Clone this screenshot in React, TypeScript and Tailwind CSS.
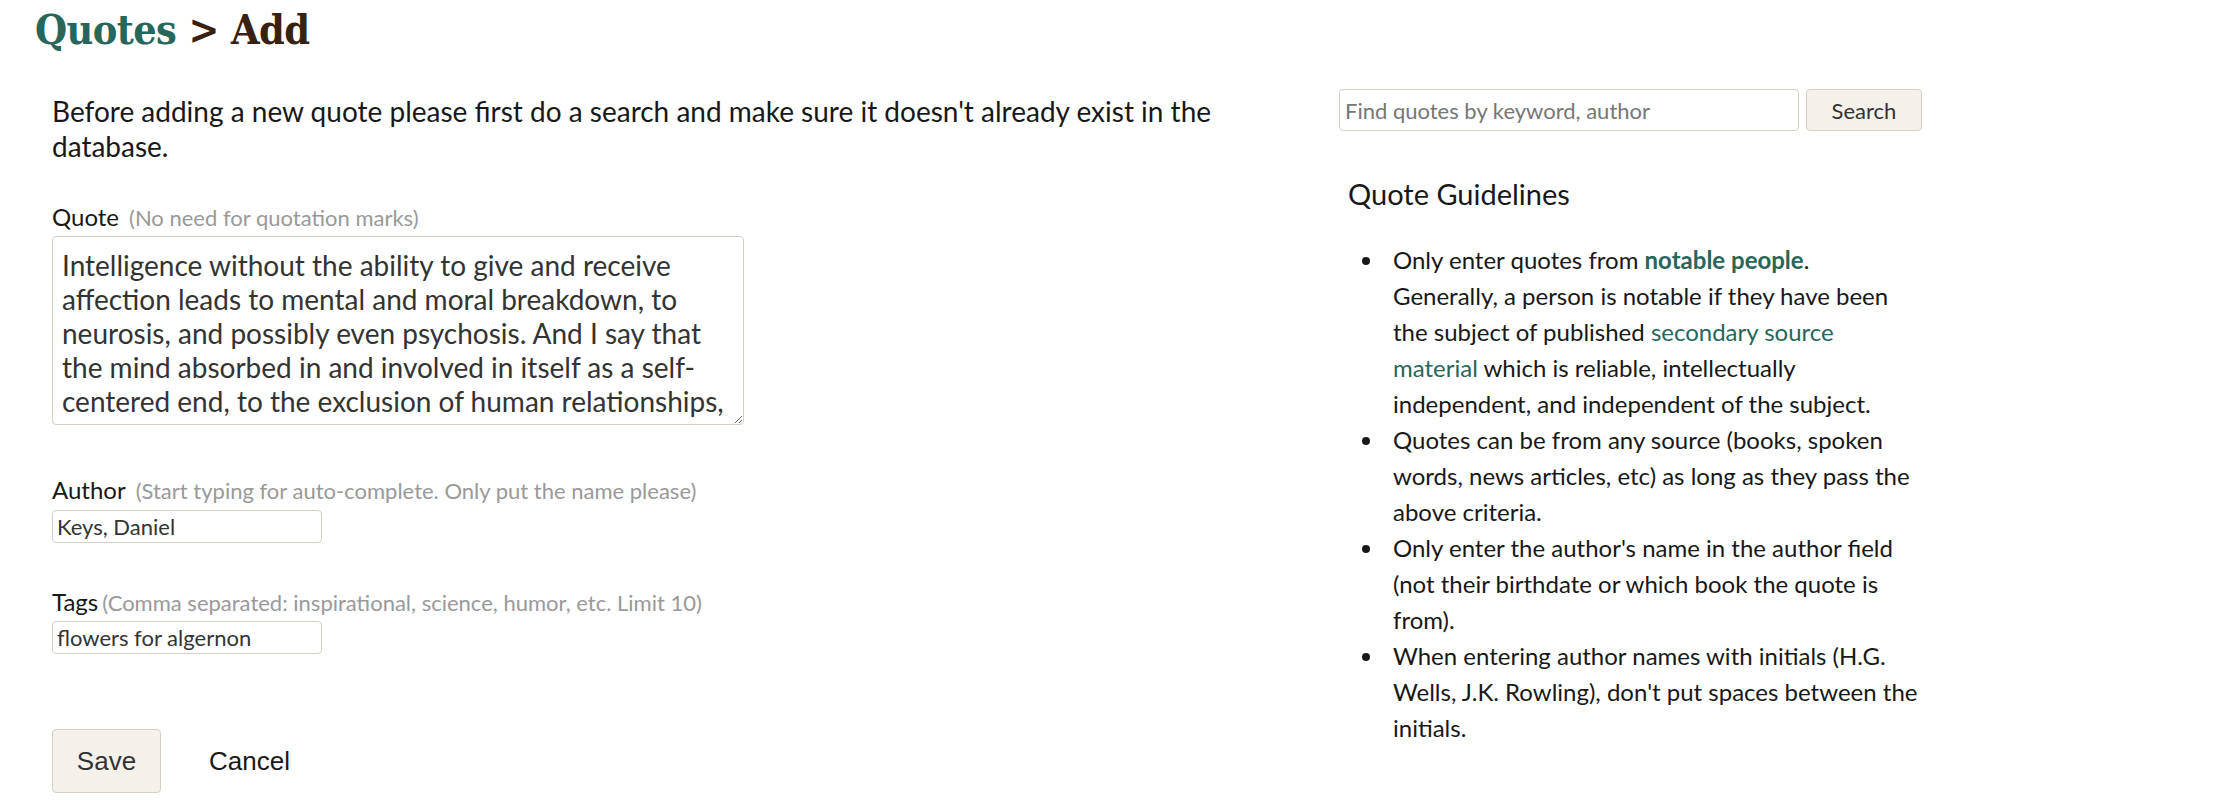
import React from 'react';

const quoteText =
  'Intelligence without the ability to give and receive affection leads to mental and moral breakdown, to neurosis, and possibly even psychosis. And I say that the mind absorbed in and involved in itself as a self-centered end, to the exclusion of human relationships, can only lead to violence and pain.';

export default function App() {
  return (
    <div className="w-[2214px] h-[810px] overflow-hidden bg-white text-[#181818] font-[Lato,sans-serif]">
      <h1 className="pl-[35px] pt-[6px] text-[41px] leading-[48px] font-bold font-['DejaVu_Serif',serif] font-stretch-condensed tracking-[-0.6px]">
        <span className="text-[#27665b]">Quotes</span>
        <span className="text-[#382110]"> &gt; Add</span>
      </h1>

      <div className="flex">
        {/* form column */}
        <div className="w-[1339px] pl-[52px]">
          <p className="mt-[40px] w-[1220px] text-[28px] leading-[35px]">
            Before adding a new quote please first do a search and make sure it doesn't already exist in the
            database.
          </p>

          <div className="mt-[36px] flex items-baseline gap-[10px]">
            <label className="text-[24px] leading-[34px]">Quote</label>
            <span className="text-[22px] text-[#999999]">(No need for quotation marks)</span>
          </div>
          <textarea
            defaultValue={quoteText}
            className="mt-[2px] block w-[692px] h-[189px] overflow-hidden rounded-[4px] border border-[#d6d0c4] pl-[9px] pr-[4px] pt-[11px] text-[28px] leading-[34px] text-[#333333] outline-none"
          />

          <div className="mt-[48px] flex items-baseline gap-[10px]">
            <label className="text-[24px] leading-[34px]">Author</label>
            <span className="text-[22px] text-[#999999]">(Start typing for auto-complete. Only put the name please)</span>
          </div>
          <input
            defaultValue="Keys, Daniel"
            className="mt-[3px] block w-[270px] h-[33px] rounded-[4px] border border-[#d6d0c4] px-[4px] text-[22px] text-[#333333] outline-none"
          />

          <div className="mt-[42px] flex items-baseline gap-[4px]">
            <label className="text-[24px] leading-[34px]">Tags</label>
            <span className="text-[22px] text-[#999999]">(Comma separated: inspirational, science, humor, etc. Limit 10)</span>
          </div>
          <input
            defaultValue="flowers for algernon"
            className="mt-[2px] block w-[270px] h-[33px] rounded-[4px] border border-[#d6d0c4] px-[4px] text-[22px] text-[#333333] outline-none"
          />

          <div className="mt-[75px] flex items-center gap-[48px] font-['Liberation_Sans',sans-serif]">
            <button className="w-[109px] h-[64px] rounded-[4px] border border-[#d6d0c4] bg-[#f4f1ea] text-[26px] text-[#333333]">
              Save
            </button>
            <a className="text-[26px] text-[#181818]">Cancel</a>
          </div>
        </div>

        {/* sidebar */}
        <div className="w-[600px]">
          <div className="mt-[35px] flex gap-[7px]">
            <input
              placeholder="Find quotes by keyword, author"
              className="w-[460px] h-[42px] rounded-[4px] border border-[#d6d0c4] px-[5px] text-[22px] placeholder:text-[#767676] outline-none"
            />
            <button className="w-[116px] h-[42px] rounded-[4px] border border-[#d6d0c4] bg-[#f4f1ea] text-[22px] text-[#333333]">
              Search
            </button>
          </div>

          <h2 className="mt-[45px] pl-[9px] text-[29px] leading-[36px]">Quote Guidelines</h2>

          <ul className="mt-[30px] w-[582px] list-disc pl-[46px] text-[24px] leading-[36px]">
            <li className="pl-[8px]">
              Only enter quotes from{' '}
              <a className="font-bold text-[#27665b]">notable people</a>.<br />
              Generally, a person is notable if they have been the subject of published{' '}
              <a className="text-[#27665b]">secondary source material</a> which is reliable, intellectually
              independent, and independent of the subject.
            </li>
            <li className="pl-[8px]">
              Quotes can be from any source (books, spoken words, news articles, etc) as long as they pass the above
              criteria.
            </li>
            <li className="pl-[8px]">
              Only enter the author's name in the author field (not their birthdate or which book the quote is from).
            </li>
            <li className="pl-[8px]">
              When entering author names with initials (H.G. Wells, J.K. Rowling), don't put spaces between the
              initials.
            </li>
          </ul>
        </div>
      </div>
    </div>
  );
}
